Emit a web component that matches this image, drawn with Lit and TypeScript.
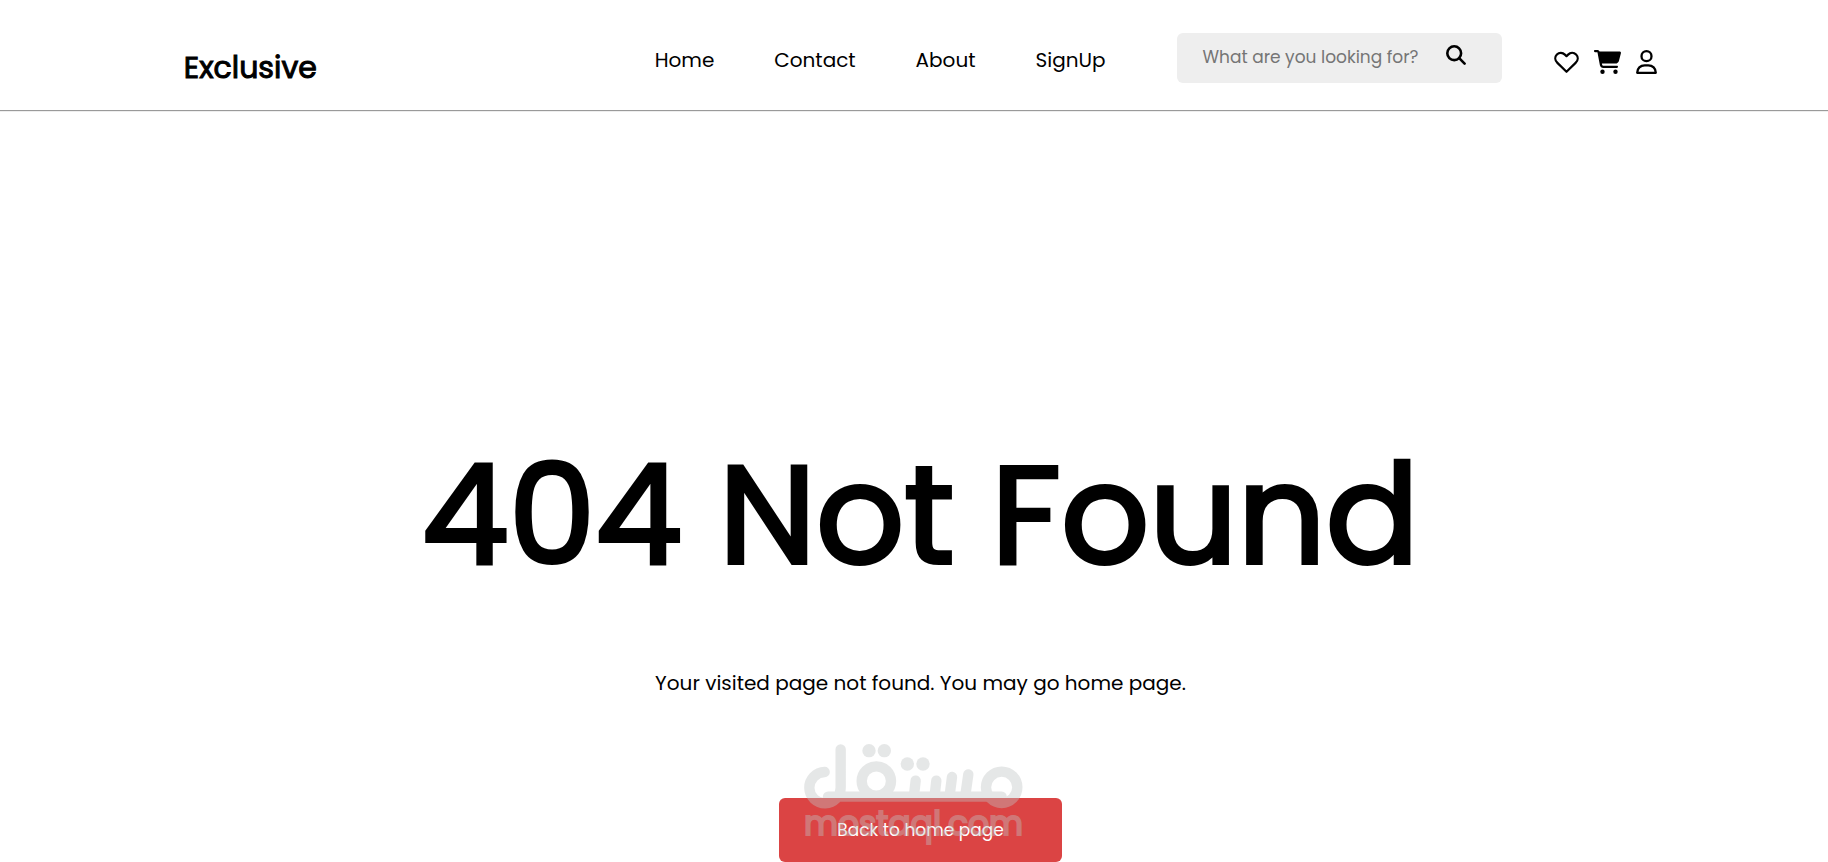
import { LitElement, html, css, svg } from "lit";
import { customElement } from "lit/decorators.js";

const heart = svg`<path fill="none" stroke="currentColor" stroke-width="2.2" stroke-linejoin="round" d="M12.5 20.800 3.400 11.900C.7 9.300 .7 5.800 2.900 3.500 5.200 1.200 8.600 1.300 10.900 3.600L12.500 5.200 14.100 3.600C16.400 1.300 19.800 1.200 22.100 3.500 24.300 5.800 24.300 9.300 21.600 11.900Z"/>`;

const cart = svg`<path fill="currentColor" d="M0 1C0 .4.4 0 1 0H3.400C4.400 0 5.200.6 5.600 1.500H25.600C26.500 1.500 27.200 2.400 26.900 3.300L24.900 10.900C24.500 12.400 23.100 13.500 21.500 13.500H7.900L8.200 14.900C8.300 15.400 8.700 15.700 9.200 15.700H22.900C24.400 15.700 24.400 18 22.900 18H9.200C7.600 18 6.200 16.800 5.900 15.300L3.500 2.600C3.500 2.400 3.300 2.200 3.100 2.200H1C.4 2.200 0 1.700 0 1Z"/><circle cx="8.500" cy="21.700" r="2.200" fill="currentColor"/><circle cx="21.500" cy="21.700" r="2.200" fill="currentColor"/>`;

const user = svg`<g fill="none" stroke="currentColor" stroke-width="2.300"><circle cx="10.500" cy="6.200" r="5"/><path stroke-linejoin="round" d="M1.200 22.800C1.200 18.500 4.400 15.300 8.700 15.300H12.300C16.600 15.300 19.800 18.500 19.800 22.800Z"/></g>`;

const magnifier = svg`<g fill="none" stroke="currentColor" stroke-width="2.600" stroke-linecap="round"><circle cx="8.200" cy="8.200" r="6.900"/><path d="M13.200 13.200 18.600 18.600"/></g>`;

@customElement("app-root")
export class AppRoot extends LitElement {
  static styles = css`
    :host {
      display: block;
      position: relative;
      min-height: 100vh;
      background: #fff;
      color: #000;
      font-family: Poppins, Inter, "Open Sans", sans-serif;
      font-size: 20px;
      line-height: 30px;
    }
    * {
      box-sizing: border-box;
    }
    a {
      color: inherit;
      text-decoration: none;
    }
    .header {
      display: flex;
      align-items: flex-start;
      padding: 33px 9% 18px 10%;
      border-bottom: 1px solid #9a9a9a;
      box-shadow: 0 1px #eee;
    }
    .logo {
      margin: 11px auto 0 1px;
      font-size: 30px;
      line-height: 48px;
      -webkit-text-stroke: 1px currentColor;
    }
    .nav {
      display: flex;
      gap: 60px;
      margin: 12px 72px 0 0;
    }
    .search {
      display: flex;
      align-items: flex-start;
      width: 325px;
      height: 50px;
      padding: 12px 36px 0 25px;
      border-radius: 6px;
      background: #eee;
    }
    .field {
      flex: 1;
      min-width: 0;
      height: 24px;
      padding: 0;
      border: 0;
      outline: 0;
      background: none;
      font: inherit;
      font-size: 17px;
      line-height: 24px;
    }
    .field::placeholder {
      color: #757575;
      opacity: 1;
    }
    .icon-button {
      display: block;
      padding: 0;
      border: 0;
      background: none;
      color: inherit;
      cursor: pointer;
    }
    svg {
      display: block;
    }
    .tools {
      display: flex;
      align-items: center;
      gap: 15px;
      margin: 17px 6px 0 52px;
    }
    .main {
      display: flex;
      flex-direction: column;
      align-items: center;
      padding: 300px 0 0 13px;
      text-align: center;
    }
    .title {
      margin: 0;
      font-size: 138px;
      font-weight: 400;
      line-height: 208px;
      -webkit-text-stroke: 4px currentColor;
    }
    .message {
      margin: 49px 0 100px;
    }
    .back {
      padding: 20px 58px;
      border-radius: 6px;
      background: #db4444;
      color: #fff;
      font-size: 17px;
      line-height: 24px;
    }
    .watermark {
      position: absolute;
      top: 742px;
      left: 50%;
      width: 221px;
      margin-left: -111px;
      opacity: 0.4;
      color: #c0c4c4;
      pointer-events: none;
    }
    .domain {
      display: flex;
      justify-content: center;
      font-size: 33px;
      line-height: 28px;
      -webkit-text-stroke: 2px currentColor;
    }
  `;

  private links = ["Home", "Contact", "About", "SignUp"];

  private icon(width: number, height: number, shape: unknown) {
    return html`<svg width=${width} height=${height} viewBox="0 0 ${width} ${height}" aria-hidden="true">${shape}</svg>`;
  }

  render() {
    return html`
      <header class="header">
        <a class="logo" href="#">Exclusive</a>
        <nav class="nav">${this.links.map((name) => html`<a href="#">${name}</a>`)}</nav>
        <form class="search" role="search" @submit=${(e: Event) => e.preventDefault()}>
          <input class="field" type="text" aria-label="Search products" placeholder="What are you looking for?" />
          <button class="icon-button" aria-label="Search">${this.icon(20, 20, magnifier)}</button>
        </form>
        <div class="tools">
          <a href="#" aria-label="Wishlist">${this.icon(25, 22, heart)}</a>
          <a href="#" aria-label="Cart">${this.icon(27, 24, cart)}</a>
          <a href="#" aria-label="Account">${this.icon(21, 24, user)}</a>
        </div>
      </header>
      <main class="main">
        <h1 class="title">404 Not Found</h1>
        <p class="message">Your visited page not found. You may go home page.</p>
        <a class="back" href="#">Back to home page</a>
      </main>
      <div class="watermark">
        <svg width="221" height="68" viewBox="130 66 663 204" role="img" aria-label="مستقل">
          <g fill="none" stroke="currentColor" stroke-width="31" stroke-linecap="round">
            <path d="M195 156A47 47 0 1 0 243 202V88M205 230H726" />
            <circle cx="350" cy="183" r="44" />
            <circle cx="726" cy="202" r="47" />
            <path d="M468 182 463 226M530 182 525 226M577 171 570 226M626 163 617 226" />
          </g>
          <g fill="currentColor">
            <circle cx="328" cy="92" r="20" />
            <circle cx="374" cy="92" r="20" />
            <circle cx="443" cy="132" r="20" />
            <circle cx="490" cy="132" r="20" />
          </g>
        </svg>
        <div class="domain">mostaql.com</div>
      </div>
    `;
  }
}
